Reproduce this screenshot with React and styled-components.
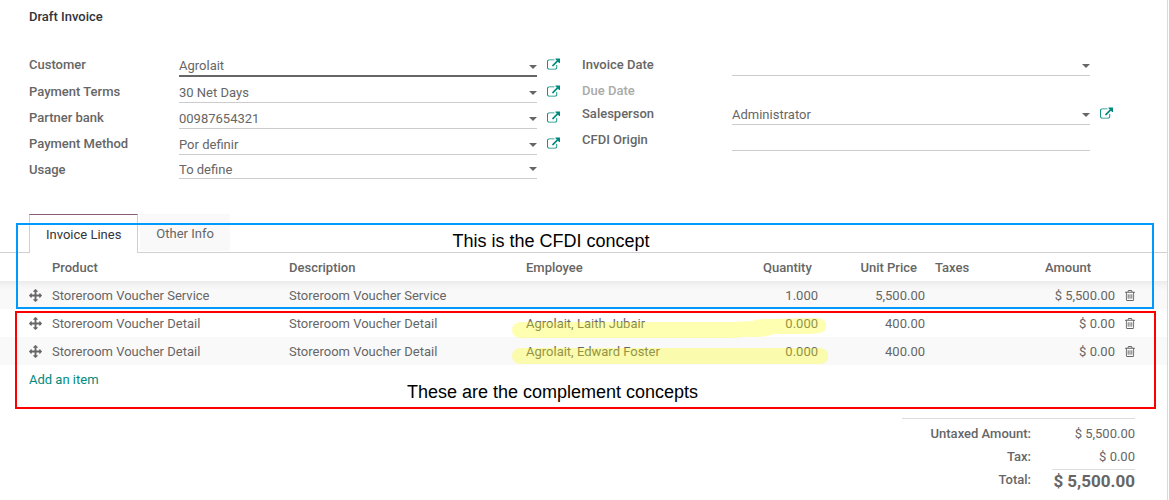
import React from "react";
import styled, { createGlobalStyle, css } from "styled-components";

const text = "#666666";
const strong = "#33333b";
const link = "#008a7e";
const line = "#cccccc";

const GlobalStyle = createGlobalStyle`
  *, *::before, *::after { box-sizing: border-box; }
  body {
    margin: 0;
    background: #fff;
    color: ${text};
    font: 400 13px/20px Roboto, "Liberation Sans", sans-serif;
  }
`;

const Sheet = styled.main`
  min-height: 100vh;
  margin-right: 1px;
  border-right: 1px solid #d9d9d9;
  overflow: hidden;
`;

const Title = styled.h1`
  margin: 0;
  padding: 7px 29px 27px;
  color: ${strong};
  font-size: 13px;
  font-weight: 500;
  line-height: 20px;
`;

const Groups = styled.form`
  display: grid;
  grid-template-columns: 1fr 1fr;
  padding: 0 32px 0 29px;
`;

const Group = styled.div`
  display: flex;
  flex-direction: column;
  gap: 4px;
`;

const Row = styled.div`
  display: grid;
  grid-template-columns: 150px 1fr 45px;
  align-items: start;
`;

const labelStyle = css`
  height: 19px;
  font-weight: 500;
  line-height: 22px;
  color: ${(p) => (p.$muted ? "#aaaaaa" : text)};
`;

const Label = styled.label`
  ${labelStyle}
`;

const MutedLabel = styled.div`
  ${labelStyle}
`;

const Control = styled.div`
  display: flex;
  position: relative;
`;

const controlStyle = css`
  width: 100%;
  margin: 0;
  border: 0;
  border-bottom: ${(p) => (p.$active ? 2 : 1)}px solid ${(p) => (p.$active ? text : line)};
  border-radius: 0;
  outline: none;
  background: transparent;
  color: inherit;
  font: inherit;
  line-height: 18px;
  appearance: none;
`;

const Input = styled.input`
  ${controlStyle}
  height: ${(p) => (p.$active ? 23 : 22)}px;
  padding: 2px 16px 1px 0;
`;

const Select = styled.select`
  ${controlStyle}
  height: 20px;
  padding: 2px 16px 0 0;
`;

const Caret = styled.svg`
  position: absolute;
  right: 0;
  bottom: 8px;
  width: 8px;
  height: 4px;
  fill: ${text};
  pointer-events: none;
`;

const IconButton = styled.button`
  display: flex;
  margin: 0;
  padding: 0;
  border: 0;
  background: none;
  color: ${(p) => (p.$link ? link : text)};
  cursor: pointer;
`;

const OpenButton = styled(IconButton)`
  margin: 4px 0 0 10px;
`;

const Notebook = styled.section`
  position: relative;
  margin-top: 35px;
`;

const Tabs = styled.nav`
  display: flex;
  gap: 2px;
  height: 39px;
  padding-left: 29px;
  border-bottom: 1px solid #d0d0d0;
`;

const Tab = styled.button`
  height: ${(p) => (p.$active ? 39 : 37)}px;
  margin: 0;
  padding: 2px 16px 0;
  border: ${(p) => (p.$active ? "1px solid #d0d0d0" : "0")};
  border-top-color: #875a7b;
  border-bottom: 0;
  background: ${(p) => (p.$active ? "#fff" : "#f9f9f9")};
  color: ${(p) => (p.$active ? strong : text)};
  font: inherit;
`;

const Lines = styled.table`
  width: 100%;
  table-layout: fixed;
  border-collapse: collapse;

  tbody tr:nth-child(odd) { background: #f9f9f9; }
  tbody tr:first-child {
    background: linear-gradient(#ebebeb, #f5f5f5 5px, #f9f9f9 10px);
  }
`;

const Col = styled.col`
  width: ${(p) => (p.$w ? `${p.$w}px` : "auto")};
`;

const Th = styled.th`
  height: 28px;
  padding: 2px ${(p) => p.$end || 5}px 0 5px;
  font-weight: 500;
  text-align: ${(p) => (p.$end ? "right" : "left")};
  white-space: nowrap;
`;

const Td = styled.td`
  height: 28px;
  padding: 2px 5px 0;
  text-align: ${(p) => (p.$num ? "right" : "left")};
  white-space: nowrap;
`;

const IconCell = styled.td`
  padding: 1px 0 0 ${(p) => p.$start}px;
`;

const AddRow = styled.div`
  height: 53px;
  padding: 5px 29px;
`;

const AddLink = styled.a`
  color: ${link};
  text-decoration: none;
`;

const Note = styled.div`
  position: absolute;
  display: flex;
  justify-content: center;
  pointer-events: none;
  color: #000;
  font: 18px/20px "Liberation Sans", Arial, sans-serif;
`;

const ConceptNote = styled(Note)`
  top: 9px;
  left: 16px;
  right: 13px;
  height: 86px;
  padding: 6px 68px 0 0;
  border: 2px solid #0099ff;
`;

const ComplementNote = styled(Note)`
  top: 97px;
  left: 15px;
  right: 11px;
  height: 98px;
  padding: 0 66px 5px 0;
  align-items: flex-end;
  border: 2px solid #ff0000;
`;

const Marker = styled.svg`
  position: absolute;
  top: 104px;
  left: 43.9%;
  width: 27.1%;
  height: 47px;
  fill: #ff0;
  fill-opacity: 0.3;
  pointer-events: none;
`;

const Totals = styled.dl`
  display: grid;
  grid-template-columns: 1fr 83px;
  column-gap: 21px;
  width: 233px;
  margin: 0 32px 0 auto;
  padding-top: 3px;
  border-top: 1px solid #dddddd;
  text-align: right;
`;

const TotalLabel = styled.dt`
  font-weight: 500;
  line-height: 23px;
`;

const TotalValue = styled.dd`
  margin: 0;
  line-height: 23px;
`;

const GrandTotal = styled(TotalValue)`
  margin-top: 1px;
  border-top: 1px solid #dddddd;
  font-size: 17px;
  font-weight: 700;
`;

const ExternalIcon = () => (
  <svg width="13" height="13" viewBox="0 0 1792 1664" fill="currentColor" aria-hidden="true">
    <path d="M1408 928v320q0 119-84.500 203.500t-203.500 84.500h-832q-119 0-203.500-84.500t-84.500-203.500v-832q0-119 84.500-203.500t203.500-84.500h704q14 0 23 9t9 23v64q0 14-9 23t-23 9h-704q-66 0-113 47t-47 113v832q0 66 47 113t113 47h832q66 0 113-47t47-113v-320q0-14 9-23t23-9h64q14 0 23 9t9 23zm384-864v512q0 26-19 45t-45 19-45-19l-176-176-652 652q-10 10-23 10t-23-10l-114-114q-10-10-10-23t10-23l652-652-176-176q-19-19-19-45t19-45 45-19h512q26 0 45 19t19 45z" />
  </svg>
);

const MoveIcon = () => (
  <svg width="13" height="13" viewBox="0 0 1792 1792" fill="currentColor" aria-hidden="true">
    <path d="M1792 896q0 26-19 45l-256 256q-19 19-45 19t-45-19-19-45v-128h-384v384h128q26 0 45 19t19 45-19 45l-256 256q-19 19-45 19t-45-19l-256-256q-19-19-19-45t19-45 45-19h128v-384h-384v128q0 26-19 45t-45 19-45-19l-256-256q-19-19-19-45t19-45l256-256q19-19 45-19t45 19 19 45v128h384v-384h-128q-26 0-45-19t-19-45 19-45l256-256q19-19 45-19t45 19l256 256q19 19 19 45t-19 45-45 19h-128v384h384v-128q0-26 19-45t45-19 45 19l256 256q19 19 19 45z" />
  </svg>
);

const TrashIcon = () => (
  <svg width="10" height="11" viewBox="192 128 1408 1536" fill="currentColor" aria-hidden="true">
    <path d="M704 736v576q0 14-9 23t-23 9h-64q-14 0-23-9t-9-23v-576q0-14 9-23t23-9h64q14 0 23 9t9 23zm256 0v576q0 14-9 23t-23 9h-64q-14 0-23-9t-9-23v-576q0-14 9-23t23-9h64q14 0 23 9t9 23zm256 0v576q0 14-9 23t-23 9h-64q-14 0-23-9t-9-23v-576q0-14 9-23t23-9h64q14 0 23 9t9 23zm128 724v-948h-896v948q0 22 7 40.500t14.500 27 10.500 8.500h832q3 0 10.500-8.500t14.500-27 7-40.500zm-672-1076h448l-48-117q-7-9-17-11h-317q-10 2-17 11zm928 32v64q0 14-9 23t-23 9h-96v948q0 83-47 143.500t-113 60.500h-832q-66 0-113-58.500t-47-141.500v-952h-96q-14 0-23-9t-9-23v-64q0-14 9-23t23-9h309l70-167q15-37 54-63t79-26h320q40 0 79 26t54 63l70 167h309q14 0 23 9t9 23z" />
  </svg>
);

function Field({ id, label, value = "", caret, open, active, select }) {
  return (
    <Row>
      <Label htmlFor={id}>{label}</Label>
      <Control>
        {select ? (
          <Select id={id} defaultValue={value}>
            <option>{value}</option>
          </Select>
        ) : (
          <Input id={id} type="text" defaultValue={value} $active={active} autoComplete="off" />
        )}
        {caret && (
          <Caret viewBox="0 0 8 4" aria-hidden="true">
            <path d="M0 0h8L4 4z" />
          </Caret>
        )}
      </Control>
      {open && (
        <OpenButton type="button" $link aria-label={`Open ${label}`}>
          <ExternalIcon />
        </OpenButton>
      )}
    </Row>
  );
}

const lines = [
  { name: "Storeroom Voucher Service", employee: "", qty: "1.000", price: "5,500.00", amount: "$ 5,500.00" },
  { name: "Storeroom Voucher Detail", employee: "Agrolait, Laith Jubair", qty: "0.000", price: "400.00", amount: "$ 0.00" },
  { name: "Storeroom Voucher Detail", employee: "Agrolait, Edward Foster", qty: "0.000", price: "400.00", amount: "$ 0.00" },
];

export default function App() {
  return (
    <>
      <GlobalStyle />
      <Sheet>
        <Title>Draft Invoice</Title>
        <Groups>
          <Group>
            <Field id="customer" label="Customer" value="Agrolait" caret open active />
            <Field id="terms" label="Payment Terms" value="30 Net Days" caret open />
            <Field id="bank" label="Partner bank" value="00987654321" caret open />
            <Field id="method" label="Payment Method" value="Por definir" caret open />
            <Field id="usage" label="Usage" value="To define" caret select />
          </Group>
          <Group>
            <Field id="date" label="Invoice Date" caret />
            <MutedLabel $muted>Due Date</MutedLabel>
            <Field id="salesperson" label="Salesperson" value="Administrator" caret open />
            <Field id="origin" label="CFDI Origin" />
          </Group>
        </Groups>

        <Notebook>
          <Tabs>
            <Tab type="button" $active>Invoice Lines</Tab>
            <Tab type="button">Other Info</Tab>
          </Tabs>
          <Lines>
            <colgroup>
              <Col $w={47} />
              <Col />
              <Col />
              <Col />
              <Col $w={65} />
              <Col $w={107} />
              <Col $w={80} />
              <Col $w={110} />
              <Col $w={47} />
            </colgroup>
            <thead>
              <tr>
                <Th />
                <Th>Product</Th>
                <Th>Description</Th>
                <Th>Employee</Th>
                <Th $end={13}>Quantity</Th>
                <Th $end={13}>Unit Price</Th>
                <Th>Taxes</Th>
                <Th $end={29}>Amount</Th>
                <Th />
              </tr>
            </thead>
            <tbody>
              {lines.map((l, i) => (
                <tr key={i}>
                  <IconCell $start={29}>
                    <IconButton type="button" aria-label="Move line">
                      <MoveIcon />
                    </IconButton>
                  </IconCell>
                  <Td>{l.name}</Td>
                  <Td>{l.name}</Td>
                  <Td>{l.employee}</Td>
                  <Td $num>{l.qty}</Td>
                  <Td $num>{l.price}</Td>
                  <Td />
                  <Td $num>{l.amount}</Td>
                  <IconCell $start={5}>
                    <IconButton type="button" aria-label="Delete line">
                      <TrashIcon />
                    </IconButton>
                  </IconCell>
                </tr>
              ))}
            </tbody>
          </Lines>
          <AddRow>
            <AddLink href="#add">Add an item</AddLink>
          </AddRow>

          <Marker viewBox="0 0 316 47" preserveAspectRatio="none" aria-hidden="true">
            <path d="M8 4H220L240 3C247 1 252 1 258 1L298 0H306Q314 1 314 8T306 15L298 16H262C250 20 240 19 232 19L220 20H8Q0 19 0 12T8 4z" />
            <path d="M8 30H308Q316 31 316 38T308 46H8Q0 45 0 38T8 30z" />
          </Marker>
          <ConceptNote>This is the CFDI concept</ConceptNote>
          <ComplementNote>These are the complement concepts</ComplementNote>
        </Notebook>

        <Totals>
          <TotalLabel>Untaxed Amount:</TotalLabel>
          <TotalValue>$ 5,500.00</TotalValue>
          <TotalLabel>Tax:</TotalLabel>
          <TotalValue>$ 0.00</TotalValue>
          <TotalLabel>Total:</TotalLabel>
          <GrandTotal>$ 5,500.00</GrandTotal>
        </Totals>
      </Sheet>
    </>
  );
}
